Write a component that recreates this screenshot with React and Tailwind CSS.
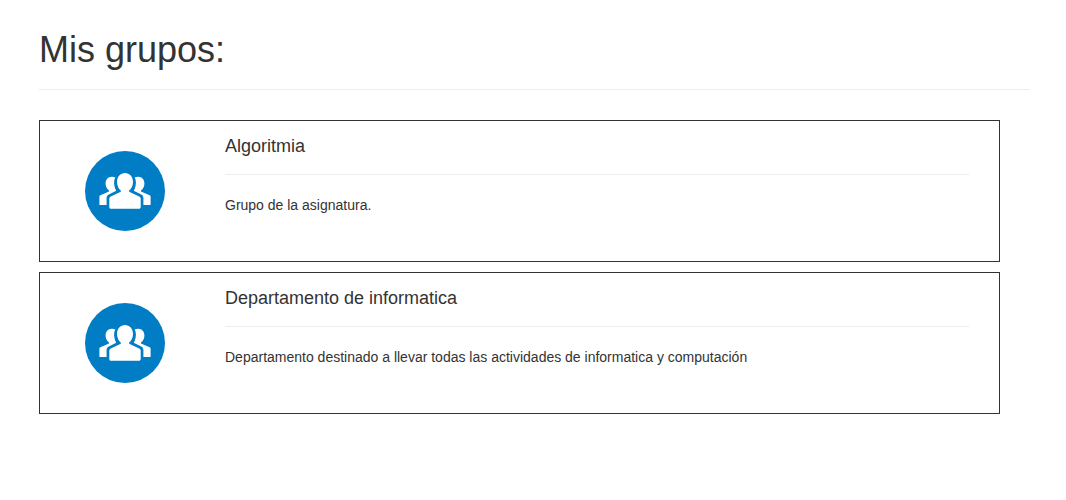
const groups = [
  { name: "Algoritmia", description: "Grupo de la asignatura." },
  {
    name: "Departamento de informatica",
    description:
      "Departamento destinado a llevar todas las actividades de informatica y computación",
  },
];

function GroupIcon() {
  return (
    <svg viewBox="0 0 80 80" className="size-20 shrink-0" aria-hidden="true">
      <circle cx="40" cy="40" r="40" fill="#007dc5" />
      <g fill="#fff">
        <path d="M27 25.7C23 25.5 20.6 28.7 20.6 32.4C20.6 35.4 22 38 24 39.4V40.6L15.4 44.2C14.7 44.5 14.4 45 14.4 45.8V53.4C14.4 53.9 14.6 54.1 15.1 54.1H21.6V47C21.6 45.4 22.4 44.2 23.8 43.5L31.2 39.8C29.6 37 28.8 33.4 29.2 30C29.4 28.3 29.8 27.2 30.4 26.4C29.4 25.9 28.2 25.7 27 25.7Z" />
        <path d="M53 25.7C57 25.5 59.4 28.7 59.4 32.4C59.4 35.4 58 38 56 39.4V40.6L64.6 44.2C65.3 44.5 65.6 45 65.6 45.8V53.4C65.6 53.9 65.4 54.1 64.9 54.1H58.4V47C58.4 45.4 57.6 44.2 56.2 43.5L48.8 39.8C50.4 37 51.2 33.4 50.8 30C50.6 28.3 50.2 27.2 49.6 26.4C50.6 25.9 51.8 25.7 53 25.7Z" />
        <path d="M40 22C35.4 22 32 25.8 32 31C32 34.6 33.6 37.8 35.8 39.6V40.8L25.8 45.4C24.7 45.9 24.3 46.6 24.3 47.6V56C24.3 57.2 25 57.8 26.2 57.8H53.8C55 57.8 55.7 57.2 55.7 56V47.6C55.7 46.6 55.3 45.9 54.2 45.4L44.2 40.8V39.6C46.4 37.8 48 34.6 48 31C48 25.8 44.6 22 40 22Z" />
      </g>
    </svg>
  );
}

export default function App() {
  return (
    <main className="bg-white pt-[30px] pr-9 pb-10 pl-[39px] font-['Liberation_Sans',Arial,sans-serif] text-[#333]">
      <header className="border-b border-[#eee] pb-[19px]">
        <h1 className="text-[36px] leading-10">Mis grupos:</h1>
      </header>
      <ul className="mt-[30px] mr-[30px] flex flex-col gap-[10px]">
        {groups.map((group) => (
          <li key={group.name} className="flex border border-[#333] pr-[30px]">
            <div className="pt-[30px] pr-[60px] pb-[30px] pl-[45px]">
              <GroupIcon />
            </div>
            <div className="min-w-0 grow pt-[15px] pb-[46px]">
              <h2 className="text-[18px] leading-5">{group.name}</h2>
              <hr className="mt-[18px] mb-5 border-[#eee]" />
              <p className="text-[14px] leading-5">{group.description}</p>
            </div>
          </li>
        ))}
      </ul>
    </main>
  );
}
